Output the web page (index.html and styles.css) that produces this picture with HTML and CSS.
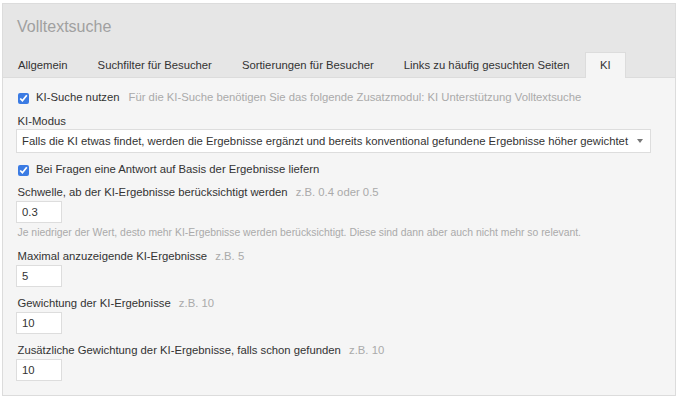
FILE: index.html
```html
<!DOCTYPE html>
<html lang="de">
<head>
  <meta charset="UTF-8">
  <meta name="viewport" content="width=device-width, initial-scale=1.0">
  <title>Volltextsuche</title>
  <link rel="stylesheet" href="styles.css">
</head>
<body>
  <div class="panel">
    <div class="panel-head">
      <h1 class="panel-title">Volltextsuche</h1>
      <ul class="tabs">
        <li>Allgemein</li>
        <li>Suchfilter für Besucher</li>
        <li>Sortierungen für Besucher</li>
        <li>Links zu häufig gesuchten Seiten</li>
        <li class="active">KI</li>
      </ul>
    </div>

    <form class="panel-body">
      <label class="check-row">
        <input type="checkbox" checked>
        <span class="check-text">KI-Suche nutzen</span>
        <span class="hint">Für die KI-Suche benötigen Sie das folgende Zusatzmodul: KI Unterstützung Volltextsuche</span>
      </label>

      <div class="field field-mode">
        <label class="field-label">KI-Modus</label>
        <div class="select-wrap">
          <select>
            <option>Falls die KI etwas findet, werden die Ergebnisse ergänzt und bereits konventional gefundene Ergebnisse höher gewichtet</option>
          </select>
        </div>
      </div>

      <label class="check-row check-answer">
        <input type="checkbox" checked>
        <span class="check-text">Bei Fragen eine Antwort auf Basis der Ergebnisse liefern</span>
      </label>

      <div class="field field-threshold">
        <label class="field-label">Schwelle, ab der KI-Ergebnisse berücksichtigt werden <span class="hint">z.B. 0.4 oder 0.5</span></label>
        <input class="small-input" type="text" value="0.3">
        <p class="help">Je niedriger der Wert, desto mehr KI-Ergebnisse werden berücksichtigt. Diese sind dann aber auch nicht mehr so relevant.</p>
      </div>

      <div class="field field-max">
        <label class="field-label">Maximal anzuzeigende KI-Ergebnisse <span class="hint">z.B. 5</span></label>
        <input class="small-input" type="text" value="5">
      </div>

      <div class="field">
        <label class="field-label">Gewichtung der KI-Ergebnisse <span class="hint">z.B. 10</span></label>
        <input class="small-input" type="text" value="10">
      </div>

      <div class="field">
        <label class="field-label">Zusätzliche Gewichtung der KI-Ergebnisse, falls schon gefunden <span class="hint">z.B. 10</span></label>
        <input class="small-input" type="text" value="10">
      </div>
    </form>
  </div>
</body>
</html>
```

FILE: styles.css
```css
body {
  margin: 0;
  background-color: #fff;
  font-family: "Liberation Sans", Arial, sans-serif;
  font-size: 11.3px;
  color: #333;
}

.panel {
  margin: 3px 4px 0 2px;
  border: 1px solid #dcdcdc;
  background-color: #f5f5f5;
}

.panel-head {
  background-color: #e6e6e6;
  padding-top: 13px;
}

.panel-title {
  margin: 0 0 16px;
  padding-left: 14px;
  font-size: 16px;
  line-height: 19px;
  font-weight: normal;
  color: #a0a0a0;
}

.tabs {
  display: flex;
  list-style: none;
  margin: 0;
  padding: 0;
  height: 25px;
  border-bottom: 1px solid #dcdcdc;
}

.tabs li {
  padding: 0 15px;
  line-height: 26px;
  color: #333;
  white-space: nowrap;
}

.tabs li.active {
  padding: 0 14.5px;
  height: 25px;
  line-height: 25px;
  background-color: #f5f5f5;
  border: 1px solid #dcdcdc;
  border-bottom: none;
  margin-bottom: -1px;
}

.panel-body {
  margin: 0;
  padding: 12px 13px 14px;
}

.check-row {
  display: flex;
  align-items: center;
  line-height: 15px;
  padding-left: 2px;
  white-space: nowrap;
}

.check-row input {
  width: 11px;
  height: 11px;
  margin: 1px 7px 0 0;
  accent-color: #3b7be3;
}

.check-row .hint {
  margin-left: 9px;
}

.hint {
  color: #aaa;
  margin-left: 5px;
}

.field {
  margin-top: 9px;
}

.field-label {
  display: block;
  line-height: 15px;
  padding-left: 1.5px;
  white-space: nowrap;
}

.check-answer {
  margin-top: 9px;
}

.field-threshold {
  margin-top: 8px;
}

.field-max {
  margin-top: 10px;
}

.select-wrap {
  position: relative;
  width: 635px;
}

.select-wrap select {
  appearance: none;
  -webkit-appearance: none;
  display: block;
  width: 100%;
  height: 24px;
  margin: 0;
  padding: 0 14px 0 5px;
  border: 1px solid #ddd;
  border-radius: 0;
  background-color: #fff;
  font-family: inherit;
  font-size: 11.3px;
  color: #333;
}

.select-wrap::after {
  content: "";
  position: absolute;
  right: 8px;
  top: 10px;
  border-left: 3.5px solid transparent;
  border-right: 3.5px solid transparent;
  border-top: 4px solid #777;
}

.small-input {
  display: block;
  box-sizing: border-box;
  width: 46px;
  height: 22px;
  margin: 1px 0 0;
  padding: 0 5px;
  border: 1px solid #ddd;
  border-radius: 0;
  background-color: #fff;
  font-family: inherit;
  font-size: 11.3px;
  color: #333;
}

.help {
  margin: 3px 0 0;
  padding-left: 1.5px;
  font-size: 10.4px;
  line-height: 13px;
  color: #aaa;
  white-space: nowrap;
}
```
